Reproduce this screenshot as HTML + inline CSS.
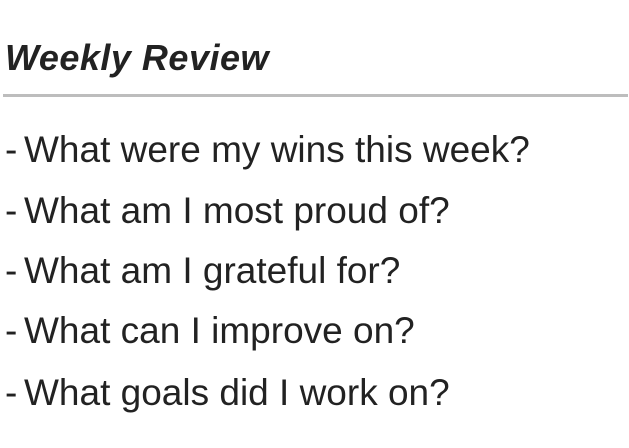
<!DOCTYPE html>
<html><head><style>
html,body{margin:0;padding:0;background:#fff;width:629px;height:448px;overflow:hidden}
body{font-family:"Liberation Sans",sans-serif;color:#222;position:relative}
h1{position:absolute;left:5px;top:33px;margin:0;font-size:36px;font-weight:bold;font-style:italic;letter-spacing:0.5px;line-height:50px;white-space:nowrap}
.rule{position:absolute;left:3px;top:94px;width:625px;height:3px;background:#bdbdbd}
.l{position:absolute;left:24px;font-size:37px;line-height:44px;white-space:nowrap;color:#222}
.l span{position:absolute;left:-19px}
</style></head><body>
<h1>Weekly Review</h1>
<div class="rule"></div>
<div class="l" style="top:128px"><span>-</span>What were my wins this week?</div>
<div class="l" style="top:189px"><span>-</span>What am I most proud of?</div>
<div class="l" style="top:249px"><span>-</span>What am I grateful for?</div>
<div class="l" style="top:309px"><span>-</span>What can I improve on?</div>
<div class="l" style="top:371px"><span>-</span>What goals did I work on?</div>
</body></html>
